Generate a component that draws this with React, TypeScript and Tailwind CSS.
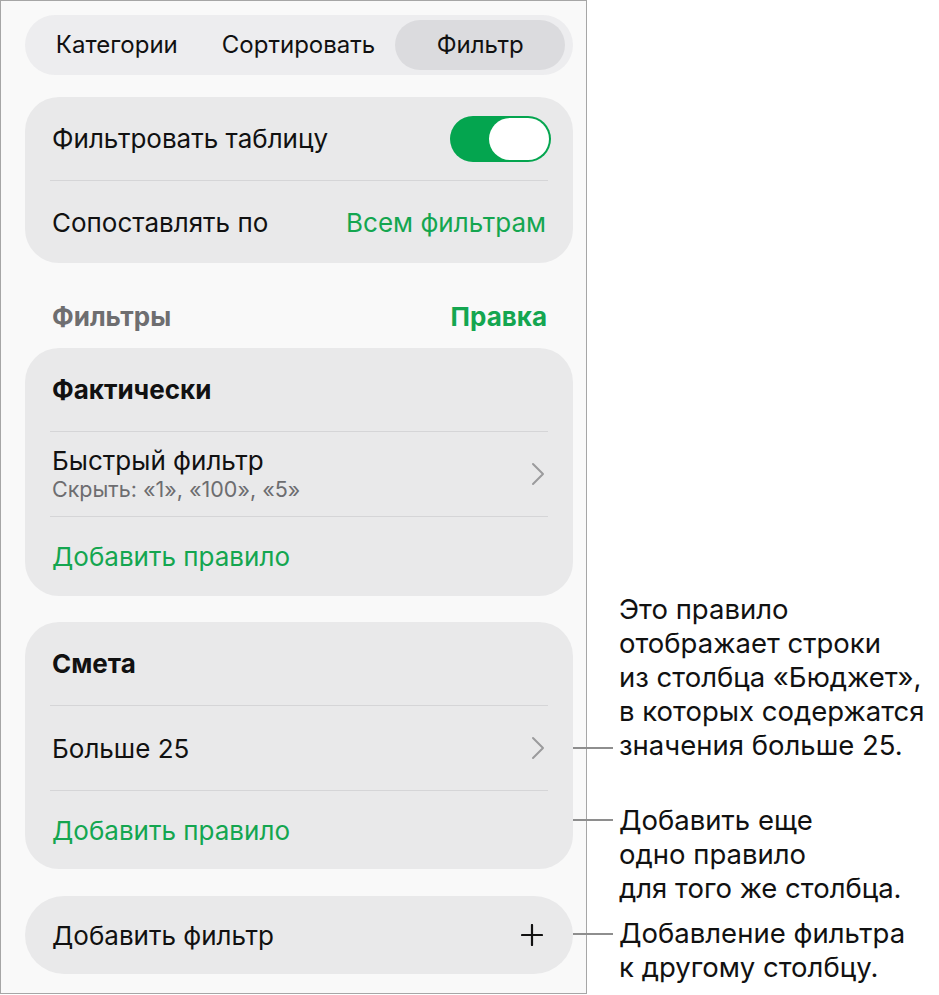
import React from "react";

const font = { fontFamily: "Inter, 'Noto Sans', 'Liberation Sans', sans-serif" };

function Divider() {
  return <div className="mx-[25px] h-px bg-[#d5d5d7]" />;
}

function Chevron() {
  return (
    <svg width="14" height="24" viewBox="0 0 14 24" fill="none" className="shrink-0">
      <path d="M2 2 L12 12 L2 22" stroke="#9b9b9d" strokeWidth="2" strokeLinecap="round" strokeLinejoin="round" />
    </svg>
  );
}

function Plus() {
  return (
    <svg width="22" height="22" viewBox="0 0 22 22" fill="none" className="shrink-0">
      <path d="M11 1 V21 M1 11 H21" stroke="#111" strokeWidth="2.2" strokeLinecap="round" />
    </svg>
  );
}

function Toggle() {
  return (
    <div className="flex h-[46px] w-[101px] items-center justify-end rounded-full bg-[#04a54f] p-[2px]">
      <div className="h-[42px] w-[60px] rounded-full bg-white" />
    </div>
  );
}

function Leader({ y }: { y: number }) {
  return <div className="absolute left-[573px] h-[2px] w-[40px] bg-[#8e8e8e]" style={{ top: y }} />;
}

function Note({ top, lines }: { top: number; lines: string[] }) {
  return (
    <div className="absolute left-[619px] text-[27.5px] leading-[34px] text-[#111]" style={{ top }}>
      {lines.map((l) => (
        <div key={l} className="whitespace-nowrap">{l}</div>
      ))}
    </div>
  );
}

export default function App() {
  return (
    <div className="relative h-[995px] w-[939px] bg-white" style={font}>
      <div className="h-[994px] w-[587px] border border-[#a6a6a6] bg-[#f9f9f9] pl-[24px] pr-[13px] pt-[14px]">
        {/* segmented control */}
        <div className="grid h-[60px] grid-cols-3 items-center rounded-full bg-[#ededef] pl-[1px] pr-[2px] text-[24px] text-[#111]">
          <div className="text-center">Категории</div>
          <div className="text-center">Сортировать</div>
          <div className="mx-[6px] flex h-[50px] items-center justify-center rounded-full bg-[#dbdbde]">Фильтр</div>
        </div>

        {/* table filter settings */}
        <div className="mt-[22px] rounded-[34px] bg-[#e9e9ea] text-[26px] text-[#111]">
          <div className="flex h-[83px] items-center justify-between pl-[27px] pr-[22px]">
            <span>Фильтровать таблицу</span>
            <Toggle />
          </div>
          <Divider />
          <div className="flex h-[82px] items-center justify-between pl-[27px] pr-[27px]">
            <span>Сопоставлять по</span>
            <span className="text-[#14a650]">Всем фильтрам</span>
          </div>
        </div>

        {/* filters header */}
        <div className="mt-[38px] flex h-[30px] items-center justify-between pl-[27px] pr-[26px] text-[26px] font-bold">
          <span className="text-[#6e6e70]">Фильтры</span>
          <span className="text-[#14a650]">Правка</span>
        </div>

        {/* column: Фактически */}
        <div className="mt-[17px] rounded-[34px] bg-[#e9e9ea] text-[26px] text-[#111]">
          <div className="flex h-[83px] items-center pl-[27px] text-[26px] font-bold">Фактически</div>
          <Divider />
          <div className="flex h-[84px] items-center justify-between pl-[27px] pr-[28px]">
            <div className="flex flex-col">
              <span className="leading-[30px]">Быстрый фильтр</span>
              <span className="text-[21.5px] leading-[26px] text-[#6d6d70]">Скрыть: «1», «100», «5»</span>
            </div>
            <Chevron />
          </div>
          <Divider />
          <div className="flex h-[79px] items-center pl-[27px] text-[#14a650]">Добавить правило</div>
        </div>

        {/* column: Смета */}
        <div className="mt-[26px] rounded-[34px] bg-[#e9e9ea] text-[26px] text-[#111]">
          <div className="flex h-[83px] items-center pl-[27px] text-[26px] font-bold">Смета</div>
          <Divider />
          <div className="flex h-[84px] items-center justify-between pl-[27px] pr-[28px]">
            <span>Больше 25</span>
            <Chevron />
          </div>
          <Divider />
          <div className="flex h-[78px] items-center pl-[27px] text-[#14a650]">Добавить правило</div>
        </div>

        {/* add filter */}
        <div className="mt-[27px] flex h-[78px] items-center justify-between rounded-full bg-[#e9e9ea] pl-[27px] pr-[30px] text-[26px] text-[#111]">
          <span>Добавить фильтр</span>
          <Plus />
        </div>
      </div>

      <Leader y={747} />
      <Leader y={819} />
      <Leader y={933} />
      <Note
        top={592}
        lines={["Это правило", "отображает строки", "из столбца «Бюджет»,", "в которых содержатся", "значения больше 25."]}
      />
      <Note top={803} lines={["Добавить еще", "одно правило", "для того же столбца."]} />
      <Note top={916} lines={["Добавление фильтра", "к другому столбцу."]} />
    </div>
  );
}
